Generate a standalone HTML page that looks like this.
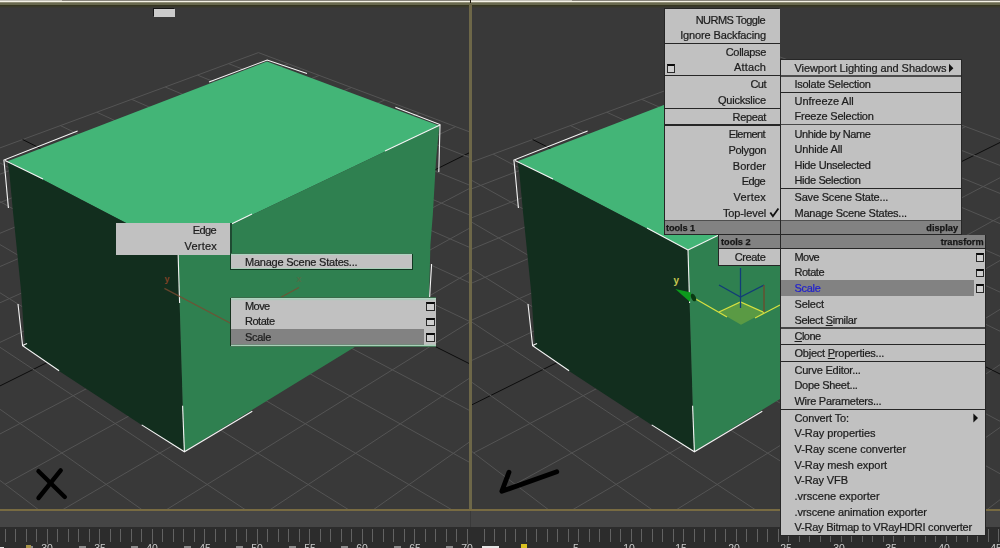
<!DOCTYPE html>
<html><head><meta charset="utf-8"><title>3ds Max quad menu</title>
<style>
html,body{margin:0;padding:0;background:#393939;}
#root{position:relative;width:1000px;height:548px;overflow:hidden;background:#393939;font-family:"Liberation Sans",sans-serif;}
.t{will-change:transform;position:absolute;height:16px;line-height:16px;font-size:11px;white-space:nowrap;-webkit-text-stroke:0.22px;}
.h{will-change:transform;position:absolute;height:13px;line-height:13px;font-size:9.2px;font-weight:bold;color:#161616;white-space:nowrap;-webkit-text-stroke:0.25px;}
.b{position:absolute;}
.ic{position:absolute;box-sizing:border-box;width:8.3px;height:8.7px;border:1.3px solid #2a2a2a;border-top:2.8px solid #0a0a0a;background:#cfcfcf;}
.tk{position:absolute;top:528.6px;width:1px;height:13.4px;background:#626262;}
  .n{will-change:transform;position:absolute;top:542.1px;width:20px;text-align:center;font-size:10.5px;line-height:12px;color:#cccccc;}
u{text-decoration:underline;}
</style></head><body><div id="root">
<div class="b" style="left:0;top:0;width:1000px;height:1px;background:#86837a"></div>
<div class="b" style="left:0;top:0;width:62px;height:1px;background:#c4c2b8"></div><div class="b" style="left:471px;top:0;width:101px;height:1px;background:#c4c2b8"></div>
<div class="b" style="left:0;top:1px;width:1000px;height:1px;background:#f5f3e6"></div>
<div class="b" style="left:0;top:2px;width:1000px;height:1px;background:#8e8c74"></div>
<div class="b" style="left:0;top:3px;width:1000px;height:2px;background:#69694f"></div>
<div class="b" style="left:0;top:5px;width:1000px;height:1px;background:#34341f"></div>
<div class="b" style="left:0;top:6px;width:1000px;height:1px;background:#38382a"></div>
<div class="b" style="left:0;top:7px;width:1000px;height:1px;background:#393932"></div>
<svg width="1000" height="548" viewBox="0 0 1000 548" style="position:absolute;left:0;top:0">
<defs><clipPath id="cl"><rect x="0" y="8" width="469" height="501"/></clipPath>
<clipPath id="cr"><rect x="472" y="8" width="528" height="501"/></clipPath></defs>
<g clip-path="url(#cl)" stroke-width="1">
<line x1="-294.8" y1="256.6" x2="258.4" y2="52.6" stroke="#545454"/>
<line x1="-268.2" y1="276.9" x2="288.2" y2="63.8" stroke="#545454"/>
<line x1="-240.1" y1="298.2" x2="319.2" y2="75.4" stroke="#545454"/>
<line x1="-210.6" y1="320.6" x2="351.4" y2="87.5" stroke="#545454"/>
<line x1="-179.5" y1="344.2" x2="384.8" y2="100.0" stroke="#545454"/>
<line x1="-146.7" y1="369.1" x2="419.6" y2="113.1" stroke="#545454"/>
<line x1="-112.0" y1="395.4" x2="455.7" y2="126.6" stroke="#545454"/>
<line x1="-75.3" y1="423.3" x2="493.4" y2="140.8" stroke="#0c0c0c"/>
<line x1="-36.3" y1="452.9" x2="532.6" y2="155.5" stroke="#545454"/>
<line x1="5.0" y1="484.3" x2="573.5" y2="170.9" stroke="#545454"/>
<line x1="49.0" y1="517.7" x2="616.2" y2="186.9" stroke="#545454"/>
<line x1="96.0" y1="553.3" x2="660.9" y2="203.6" stroke="#545454"/>
<line x1="146.1" y1="591.4" x2="707.6" y2="221.2" stroke="#545454"/>
<line x1="199.8" y1="632.2" x2="756.5" y2="239.5" stroke="#545454"/>
<line x1="257.5" y1="676.0" x2="807.8" y2="258.8" stroke="#545454"/>
<line x1="-294.8" y1="256.6" x2="257.5" y2="676.0" stroke="#545454"/>
<line x1="-242.9" y1="237.5" x2="315.2" y2="632.2" stroke="#545454"/>
<line x1="-193.5" y1="219.2" x2="368.9" y2="591.5" stroke="#545454"/>
<line x1="-146.3" y1="201.8" x2="419.0" y2="553.5" stroke="#545454"/>
<line x1="-101.2" y1="185.2" x2="465.9" y2="518.0" stroke="#545454"/>
<line x1="-58.2" y1="169.3" x2="509.8" y2="484.7" stroke="#545454"/>
<line x1="-16.9" y1="154.1" x2="551.0" y2="453.4" stroke="#545454"/>
<line x1="22.6" y1="139.5" x2="589.8" y2="424.1" stroke="#0c0c0c"/>
<line x1="60.4" y1="125.6" x2="626.3" y2="396.4" stroke="#545454"/>
<line x1="96.7" y1="112.2" x2="660.8" y2="370.2" stroke="#545454"/>
<line x1="131.6" y1="99.3" x2="693.4" y2="345.5" stroke="#545454"/>
<line x1="165.2" y1="87.0" x2="724.3" y2="322.1" stroke="#545454"/>
<line x1="197.4" y1="75.1" x2="753.5" y2="299.9" stroke="#545454"/>
<line x1="228.5" y1="63.6" x2="781.3" y2="278.8" stroke="#545454"/>
<line x1="258.4" y1="52.6" x2="807.8" y2="258.8" stroke="#545454"/>
<polygon points="7.5,161.2 267.0,61.5 439.3,125.8 178.0,250.0" fill="#43b577"/>
<polygon points="7.5,161.2 178.0,250.0 184.2,451.6 141.7,425.0 59.0,371.0 25.0,347.0 21.0,290.0 15.2,233.0 12.6,208.0 9.6,175.0" fill="#122e1e"/>
<polygon points="178.0,250.0 439.3,125.8 436.0,160.0 432.8,215.0 430.4,245.0 429.0,301.5 184.2,451.6" fill="#2f8050"/>
<polyline points="8.4,208.0 5.4,175.0 3.9,160.0 77.6,131.0" stroke="#f4f4f4" stroke-width="1.1" fill="none"/>
<polyline points="209.0,82.0 267.2,60.0 307.0,73.5" stroke="#f4f4f4" stroke-width="1.1" fill="none"/>
<polyline points="395.4,107.2 440.0,124.5 438.8,172.0" stroke="#f4f4f4" stroke-width="1.1" fill="none"/>
<polyline points="440.0,125.0 385.0,151.0" stroke="#f4f4f4" stroke-width="1.1" fill="none"/>
<polyline points="18.0,304.0 22.6,345.6 59.1,370.8" stroke="#f4f4f4" stroke-width="1.1" fill="none"/>
<polyline points="22.6,345.6 27.0,343.6" stroke="#f4f4f4" stroke-width="1.1" fill="none"/>
<polyline points="141.7,424.9 184.4,451.8 252.3,411.2" stroke="#f4f4f4" stroke-width="1.1" fill="none"/>
<polyline points="184.4,451.8 182.6,405.7" stroke="#f4f4f4" stroke-width="1.1" fill="none"/>
<polyline points="431.6,264.0 429.6,297.5" stroke="#f4f4f4" stroke-width="1.1" fill="none"/>
<polyline points="178.0,250.0 179.6,303.0" stroke="#f4f4f4" stroke-width="1.1" fill="none"/>
<polyline points="178.0,250.0 252.0,214.0" stroke="#f4f4f4" stroke-width="1.1" fill="none"/>
<polyline points="178.0,250.0 137.0,228.0" stroke="#f4f4f4" stroke-width="1.1" fill="none"/>
<polyline points="5.0,160.4 43.0,179.0" stroke="#f4f4f4" stroke-width="1.1" fill="none"/>
<g stroke="#7a4a30" stroke-width="1.2" fill="none" opacity="0.8"><line x1="164.4" y1="288.4" x2="231" y2="323.5"/><line x1="279.6" y1="298" x2="299" y2="287.5"/></g>
<text x="164.5" y="282" font-family="Liberation Sans" font-size="9" font-weight="bold" fill="#8a4428" opacity="0.9">y</text>
<text x="296.5" y="282" font-family="Liberation Sans" font-size="9" font-weight="bold" fill="#5a6a44" opacity="0.7">x</text>
<g stroke="#000" stroke-width="4.4" stroke-linecap="round"><line x1="38.5" y1="471.2" x2="64.8" y2="497"/><line x1="60.7" y1="470.4" x2="38.5" y2="498"/></g>
</g>
<g clip-path="url(#cr)" stroke-width="1">
<line x1="215.2" y1="256.6" x2="768.4" y2="52.6" stroke="#545454"/>
<line x1="241.8" y1="276.9" x2="798.2" y2="63.8" stroke="#545454"/>
<line x1="269.9" y1="298.2" x2="829.2" y2="75.4" stroke="#545454"/>
<line x1="299.4" y1="320.6" x2="861.4" y2="87.5" stroke="#545454"/>
<line x1="330.5" y1="344.2" x2="894.8" y2="100.0" stroke="#545454"/>
<line x1="363.3" y1="369.1" x2="929.6" y2="113.1" stroke="#545454"/>
<line x1="398.0" y1="395.4" x2="965.7" y2="126.6" stroke="#545454"/>
<line x1="434.7" y1="423.3" x2="1003.4" y2="140.8" stroke="#0c0c0c"/>
<line x1="473.7" y1="452.9" x2="1042.6" y2="155.5" stroke="#545454"/>
<line x1="515.0" y1="484.3" x2="1083.5" y2="170.9" stroke="#545454"/>
<line x1="559.0" y1="517.7" x2="1126.2" y2="186.9" stroke="#545454"/>
<line x1="606.0" y1="553.3" x2="1170.9" y2="203.6" stroke="#545454"/>
<line x1="656.1" y1="591.4" x2="1217.6" y2="221.2" stroke="#545454"/>
<line x1="709.8" y1="632.2" x2="1266.5" y2="239.5" stroke="#545454"/>
<line x1="767.5" y1="676.0" x2="1317.8" y2="258.8" stroke="#545454"/>
<line x1="215.2" y1="256.6" x2="767.5" y2="676.0" stroke="#545454"/>
<line x1="267.1" y1="237.5" x2="825.2" y2="632.2" stroke="#545454"/>
<line x1="316.5" y1="219.2" x2="878.9" y2="591.5" stroke="#545454"/>
<line x1="363.7" y1="201.8" x2="929.0" y2="553.5" stroke="#545454"/>
<line x1="408.8" y1="185.2" x2="975.9" y2="518.0" stroke="#545454"/>
<line x1="451.8" y1="169.3" x2="1019.8" y2="484.7" stroke="#545454"/>
<line x1="493.1" y1="154.1" x2="1061.0" y2="453.4" stroke="#545454"/>
<line x1="532.6" y1="139.5" x2="1099.8" y2="424.1" stroke="#0c0c0c"/>
<line x1="570.4" y1="125.6" x2="1136.3" y2="396.4" stroke="#545454"/>
<line x1="606.7" y1="112.2" x2="1170.8" y2="370.2" stroke="#545454"/>
<line x1="641.6" y1="99.3" x2="1203.4" y2="345.5" stroke="#545454"/>
<line x1="675.2" y1="87.0" x2="1234.3" y2="322.1" stroke="#545454"/>
<line x1="707.4" y1="75.1" x2="1263.5" y2="299.9" stroke="#545454"/>
<line x1="738.5" y1="63.6" x2="1291.3" y2="278.8" stroke="#545454"/>
<line x1="768.4" y1="52.6" x2="1317.8" y2="258.8" stroke="#545454"/>
<polygon points="517.5,161.2 777.0,61.5 949.3,125.8 688.0,250.0" fill="#43b577"/>
<polygon points="517.5,161.2 688.0,250.0 694.2,451.6 651.7,425.0 569.0,371.0 535.0,347.0 531.0,290.0 525.2,233.0 522.6,208.0 519.6,175.0" fill="#122e1e"/>
<polygon points="688.0,250.0 949.3,125.8 946.0,160.0 942.8,215.0 940.4,245.0 939.0,301.5 694.2,451.6" fill="#2f8050"/>
<polyline points="518.4,208.0 515.4,175.0 513.9,160.0 587.6,131.0" stroke="#f4f4f4" stroke-width="1.1" fill="none"/>
<polyline points="719.0,82.0 777.2,60.0 817.0,73.5" stroke="#f4f4f4" stroke-width="1.1" fill="none"/>
<polyline points="905.4,107.2 950.0,124.5 948.8,172.0" stroke="#f4f4f4" stroke-width="1.1" fill="none"/>
<polyline points="950.0,125.0 895.0,151.0" stroke="#f4f4f4" stroke-width="1.1" fill="none"/>
<polyline points="528.0,304.0 532.6,345.6 569.1,370.8" stroke="#f4f4f4" stroke-width="1.1" fill="none"/>
<polyline points="532.6,345.6 537.0,343.6" stroke="#f4f4f4" stroke-width="1.1" fill="none"/>
<polyline points="651.7,424.9 694.4,451.8 762.3,411.2" stroke="#f4f4f4" stroke-width="1.1" fill="none"/>
<polyline points="694.4,451.8 692.6,405.7" stroke="#f4f4f4" stroke-width="1.1" fill="none"/>
<polyline points="941.6,264.0 939.6,297.5" stroke="#f4f4f4" stroke-width="1.1" fill="none"/>
<polyline points="688.0,250.0 689.6,303.0" stroke="#f4f4f4" stroke-width="1.1" fill="none"/>
<polyline points="688.0,250.0 762.0,214.0" stroke="#f4f4f4" stroke-width="1.1" fill="none"/>
<polyline points="688.0,250.0 647.0,228.0" stroke="#f4f4f4" stroke-width="1.1" fill="none"/>
<polyline points="515.0,160.4 553.0,179.0" stroke="#f4f4f4" stroke-width="1.1" fill="none"/>
<polyline points="556.8,471.8 501.8,491.3 509,472.2" stroke="#000" stroke-width="4.8" stroke-linecap="round" stroke-linejoin="round" fill="none"/>
<!-- gizmo -->
<polygon points="719,312 740.5,302 764,312.4 741,324.7" fill="#5a9a44"/>
<g stroke="#d8e040" stroke-width="1.3" fill="none"><polyline points="694,298 727,317"/><polyline points="719,312 740.5,302 764,312.4"/><line x1="755" y1="318" x2="780" y2="305"/></g>
<g stroke="#123c78" stroke-width="1.3" fill="none"><line x1="740.5" y1="268" x2="740.5" y2="308"/><polyline points="719,285 740.5,297 764,285"/></g>
<line x1="764" y1="285" x2="764" y2="312" stroke="#6e4a2c" stroke-width="1.3"/>
<polygon points="675.3,289 691,292.5 690,302" fill="#0c9a1c"/>
<ellipse cx="693.5" cy="297.5" rx="2.2" ry="4" fill="#0a3a12" transform="rotate(-25 693.5 297.5)"/>
<text x="673.6" y="284" font-family="Liberation Sans" font-size="10" font-weight="bold" fill="#c8c850">y</text>
</g>
</svg>
<div class="b" style="left:154px;top:8.6px;width:21px;height:8px;background:#cbcbcb;box-shadow:-1px -1px 0 #151515"></div>
<div class="b" style="left:468.7px;top:4px;width:2.9px;height:506px;background:#6d6748"></div><div class="b" style="left:469.8px;top:0;width:1.3px;height:2.7px;background:#1c160a"></div>
<div class="b" style="left:0;top:508.7px;width:1000px;height:2.6px;background:#786b42"></div>
<div class="b" style="left:0;top:511.3px;width:1000px;height:16px;background:#454545"></div>
<div class="b" style="left:0;top:527.2px;width:1000px;height:21px;background:#2c2c2c"></div>
<div class="b" style="left:470px;top:511px;width:1px;height:16px;background:#3a3a3a"></div>
<div class="tk" style="left:4.5px"></div><div class="tk" style="left:15.0px"></div><div class="tk" style="left:25.5px"></div><div class="tk" style="left:36.0px"></div><div class="tk" style="left:46.5px;height:15.2px"></div><div class="tk" style="left:57.0px"></div><div class="tk" style="left:67.5px"></div><div class="tk" style="left:78.0px"></div><div class="tk" style="left:88.5px"></div><div class="tk" style="left:99.0px;height:15.2px"></div><div class="tk" style="left:109.5px"></div><div class="tk" style="left:120.0px"></div><div class="tk" style="left:130.5px"></div><div class="tk" style="left:141.0px"></div><div class="tk" style="left:151.5px;height:15.2px"></div><div class="tk" style="left:162.0px"></div><div class="tk" style="left:172.5px"></div><div class="tk" style="left:183.0px"></div><div class="tk" style="left:193.5px"></div><div class="tk" style="left:204.0px;height:15.2px"></div><div class="tk" style="left:214.5px"></div><div class="tk" style="left:225.0px"></div><div class="tk" style="left:235.5px"></div><div class="tk" style="left:246.0px"></div><div class="tk" style="left:256.5px;height:15.2px"></div><div class="tk" style="left:267.0px"></div><div class="tk" style="left:277.5px"></div><div class="tk" style="left:288.0px"></div><div class="tk" style="left:298.5px"></div><div class="tk" style="left:309.0px;height:15.2px"></div><div class="tk" style="left:319.5px"></div><div class="tk" style="left:330.0px"></div><div class="tk" style="left:340.5px"></div><div class="tk" style="left:351.0px"></div><div class="tk" style="left:361.5px;height:15.2px"></div><div class="tk" style="left:372.0px"></div><div class="tk" style="left:382.5px"></div><div class="tk" style="left:393.0px"></div><div class="tk" style="left:403.5px"></div><div class="tk" style="left:414.0px;height:15.2px"></div><div class="tk" style="left:424.5px"></div><div class="tk" style="left:435.0px"></div><div class="tk" style="left:445.5px"></div><div class="tk" style="left:456.0px"></div><div class="tk" style="left:466.5px;height:15.2px"></div><div class="tk" style="left:483.8px"></div><div class="tk" style="left:494.3px"></div><div class="tk" style="left:504.8px"></div><div class="tk" style="left:515.3px"></div><div class="tk" style="left:525.8px"></div><div class="tk" style="left:536.3px"></div><div class="tk" style="left:546.8px"></div><div class="tk" style="left:557.3px"></div><div class="tk" style="left:567.8px"></div><div class="tk" style="left:578.3px"></div><div class="tk" style="left:588.8px"></div><div class="tk" style="left:599.3px"></div><div class="tk" style="left:609.8px"></div><div class="tk" style="left:620.3px"></div><div class="tk" style="left:630.8px"></div><div class="tk" style="left:641.3px"></div><div class="tk" style="left:651.8px"></div><div class="tk" style="left:662.3px"></div><div class="tk" style="left:672.8px"></div><div class="tk" style="left:683.3px"></div><div class="tk" style="left:693.8px"></div><div class="tk" style="left:704.3px"></div><div class="tk" style="left:714.8px"></div><div class="tk" style="left:725.3px"></div><div class="tk" style="left:735.8px"></div><div class="tk" style="left:746.3px"></div><div class="tk" style="left:756.8px"></div><div class="tk" style="left:767.3px"></div><div class="tk" style="left:777.8px"></div><div class="tk" style="left:788.3px"></div><div class="tk" style="left:798.8px"></div><div class="tk" style="left:809.3px"></div><div class="tk" style="left:819.8px"></div><div class="tk" style="left:830.3px"></div><div class="tk" style="left:840.8px"></div><div class="tk" style="left:851.3px"></div><div class="tk" style="left:861.8px"></div><div class="tk" style="left:872.3px"></div><div class="tk" style="left:882.8px"></div><div class="tk" style="left:893.3px"></div><div class="tk" style="left:903.8px"></div><div class="tk" style="left:914.3px"></div><div class="tk" style="left:924.8px"></div><div class="tk" style="left:935.3px"></div><div class="tk" style="left:945.8px"></div><div class="tk" style="left:956.3px"></div><div class="tk" style="left:966.8px"></div><div class="tk" style="left:977.3px"></div><div class="tk" style="left:987.8px"></div><div class="tk" style="left:998.3px"></div>
<div class="n" style="left:37.0px">30</div><div class="n" style="left:89.5px">35</div><div class="n" style="left:142.0px">40</div><div class="n" style="left:194.5px">45</div><div class="n" style="left:247.0px">50</div><div class="n" style="left:299.5px">55</div><div class="n" style="left:352.0px">60</div><div class="n" style="left:404.5px">65</div><div class="n" style="left:457.0px">70</div><div class="b" style="left:26.0px;top:546.3px;width:7px;height:1.7px;background:#8a8a8a"></div><div class="b" style="left:78.5px;top:546.3px;width:7px;height:1.7px;background:#8a8a8a"></div><div class="b" style="left:131.0px;top:546.3px;width:7px;height:1.7px;background:#8a8a8a"></div><div class="b" style="left:183.5px;top:546.3px;width:7px;height:1.7px;background:#8a8a8a"></div><div class="b" style="left:236.0px;top:546.3px;width:7px;height:1.7px;background:#8a8a8a"></div><div class="b" style="left:288.5px;top:546.3px;width:7px;height:1.7px;background:#8a8a8a"></div><div class="b" style="left:341.0px;top:546.3px;width:7px;height:1.7px;background:#8a8a8a"></div><div class="b" style="left:393.5px;top:546.3px;width:7px;height:1.7px;background:#8a8a8a"></div><div class="b" style="left:446.0px;top:546.3px;width:7px;height:1.7px;background:#8a8a8a"></div><div class="n" style="left:566.0px">5</div><div class="n" style="left:618.5px">10</div><div class="n" style="left:671.0px">15</div><div class="n" style="left:723.5px">20</div><div class="n" style="left:776.0px">25</div><div class="n" style="left:828.5px">30</div><div class="n" style="left:881.0px">35</div><div class="n" style="left:933.5px">40</div><div class="n" style="left:986.0px">45</div>
<div class="b" style="left:482px;top:546px;width:17px;height:2px;background:#e4e4e4"></div>
<div class="b" style="left:521px;top:543.5px;width:6px;height:5px;background:#d8c020"></div>
<div class="b" style="left:0;top:546.6px;width:4px;height:2px;background:#e0e0e0"></div>
<div class="b" style="left:25.5px;top:545.2px;width:5.5px;height:3px;background:#a8944a"></div>
<div class="b" style="left:664px;top:8px;width:116px;height:227px;background:#262626;"></div><div class="b" style="left:779px;top:8px;width:1.2px;height:51.2px;background:#393939;"></div><div class="b" style="left:665px;top:9px;width:114.6px;height:212px;background:#c1c1c1;"></div><div class="b" style="left:665px;top:221px;width:114.6px;height:13px;background:#828282;"></div><div class="b" style="left:665px;top:220.4px;width:114.6px;height:1px;background:#4e4e4e;"></div><div class="b" style="left:665px;top:42.5px;width:114.6px;height:1.1px;background:#262626;"></div><div class="b" style="left:665px;top:75.0px;width:114.6px;height:1.1px;background:#262626;"></div><div class="b" style="left:665px;top:107.5px;width:114.6px;height:1.1px;background:#262626;"></div><div class="b" style="left:665px;top:124.3px;width:114.6px;height:1.6px;background:#262626;"></div><div class="t" style="left:665px;width:101.00px;top:12px;padding-top:0.00px;text-align:right;color:#1c1c1c;letter-spacing:-0.52px;margin-left:-0.52px;">NURMS Toggle</div><div class="t" style="left:665px;width:101.00px;top:27px;padding-top:0.00px;text-align:right;color:#1c1c1c;letter-spacing:-0.13px;margin-left:-0.13px;">Ignore Backfacing</div><div class="t" style="left:665px;width:101.00px;top:44px;padding-top:0.00px;text-align:right;color:#1c1c1c;letter-spacing:-0.32px;margin-left:-0.32px;">Collapse</div><div class="t" style="left:665px;width:101.00px;top:59px;padding-top:0.00px;text-align:right;color:#1c1c1c;letter-spacing:0.12px;margin-left:0.12px;">Attach</div><div class="t" style="left:665px;width:101.00px;top:76px;padding-top:0.00px;text-align:right;color:#1c1c1c;letter-spacing:-0.51px;margin-left:-0.51px;">Cut</div><div class="t" style="left:665px;width:101.00px;top:92px;padding-top:0.00px;text-align:right;color:#1c1c1c;letter-spacing:-0.21px;margin-left:-0.21px;">Quickslice</div><div class="t" style="left:665px;width:101.00px;top:109px;padding-top:0.00px;text-align:right;color:#1c1c1c;letter-spacing:-0.34px;margin-left:-0.34px;">Repeat</div><div class="t" style="left:665px;width:101.00px;top:126px;padding-top:0.00px;text-align:right;color:#1c1c1c;letter-spacing:-0.59px;margin-left:-0.59px;">Element</div><div class="t" style="left:665px;width:101.00px;top:142px;padding-top:0.00px;text-align:right;color:#1c1c1c;letter-spacing:-0.33px;margin-left:-0.33px;">Polygon</div><div class="t" style="left:665px;width:101.00px;top:158px;padding-top:0.00px;text-align:right;color:#1c1c1c;letter-spacing:0.03px;margin-left:0.03px;">Border</div><div class="t" style="left:665px;width:101.00px;top:173px;padding-top:0.00px;text-align:right;color:#1c1c1c;letter-spacing:-0.63px;margin-left:-0.63px;">Edge</div><div class="t" style="left:665px;width:101.00px;top:189px;padding-top:0.00px;text-align:right;color:#1c1c1c;letter-spacing:0.22px;margin-left:0.22px;">Vertex</div><div class="t" style="left:665px;width:101.00px;top:205px;padding-top:0.00px;text-align:right;color:#1c1c1c;letter-spacing:-0.10px;margin-left:-0.10px;">Top-level</div><div class="ic" style="left:666.6px;top:64.2px"></div><div class="h" style="left:666.3px;top:222px;letter-spacing:-0.1px">tools 1</div><svg style="position:absolute;left:768px;top:206px" width="12" height="12" viewBox="0 0 12 12"><path d="M2.3 6.6 L4.9 10.3 L10.4 2.6" stroke="#111" stroke-width="1.8" fill="none"/></svg><div class="b" style="left:779.6px;top:59px;width:182.4px;height:176px;background:#262626;"></div><div class="b" style="left:781px;top:60px;width:180px;height:161px;background:#c1c1c1;"></div><div class="b" style="left:781px;top:221px;width:180px;height:13px;background:#828282;"></div><div class="b" style="left:781px;top:220.4px;width:180px;height:1px;background:#4e4e4e;"></div><div class="b" style="left:781px;top:75.1px;width:180px;height:1.6px;background:#4c4c4c;"></div><div class="b" style="left:781px;top:123.9px;width:180px;height:1.5px;background:#474747;"></div><div class="b" style="left:781px;top:91.95px;width:180px;height:1.1px;background:#262626;"></div><div class="b" style="left:781px;top:187.54999999999998px;width:180px;height:1.1px;background:#262626;"></div><div class="t" style="left:794px;top:60px;padding:0.00px 0 0 0.50px;color:#1c1c1c;letter-spacing:-0.07px;">Viewport Lighting and Shadows</div><div class="t" style="left:794px;top:76px;padding:0.00px 0 0 0.50px;color:#1c1c1c;letter-spacing:-0.27px;">Isolate Selection</div><div class="t" style="left:794px;top:93px;padding:0.00px 0 0 0.50px;color:#1c1c1c;letter-spacing:-0.00px;">Unfreeze All</div><div class="t" style="left:794px;top:108px;padding:0.00px 0 0 0.50px;color:#1c1c1c;letter-spacing:-0.21px;">Freeze Selection</div><div class="t" style="left:794px;top:126px;padding:0.00px 0 0 0.50px;color:#1c1c1c;letter-spacing:-0.43px;">Unhide by Name</div><div class="t" style="left:794px;top:141px;padding:0.00px 0 0 0.50px;color:#1c1c1c;letter-spacing:-0.18px;">Unhide All</div><div class="t" style="left:794px;top:157px;padding:0.00px 0 0 0.50px;color:#1c1c1c;letter-spacing:-0.31px;">Hide Unselected</div><div class="t" style="left:794px;top:172px;padding:0.00px 0 0 0.50px;color:#1c1c1c;letter-spacing:-0.36px;">Hide Selection</div><div class="t" style="left:794px;top:189px;padding:0.00px 0 0 0.50px;color:#1c1c1c;letter-spacing:-0.19px;">Save Scene State...</div><div class="t" style="left:794px;top:205px;padding:0.00px 0 0 0.50px;color:#1c1c1c;letter-spacing:-0.23px;">Manage Scene States...</div><div class="h" style="left:781px;width:177px;text-align:right;top:222px">display</div><svg style="position:absolute;left:947px;top:62px" width="8" height="12" viewBox="0 0 8 12"><path d="M2 1.8 L6.4 6.2 L2 10.6 Z" fill="#111"/></svg><div class="b" style="left:718px;top:235px;width:63px;height:31px;background:#262626;"></div><div class="b" style="left:719px;top:235.2px;width:61px;height:12.8px;background:#828282;"></div><div class="b" style="left:719px;top:249px;width:61px;height:15.6px;background:#c1c1c1;"></div><div class="h" style="left:720.6px;top:235.6px">tools 2</div><div class="t" style="left:718px;width:47.50px;top:249px;padding-top:0.00px;text-align:right;color:#1c1c1c;letter-spacing:-0.37px;margin-left:-0.37px;">Create</div><div class="b" style="left:780px;top:235px;width:206px;height:301px;background:#262626;"></div><div class="b" style="left:781px;top:235.2px;width:204px;height:12.8px;background:#828282;"></div><div class="b" style="left:781px;top:249px;width:204px;height:286px;background:#c1c1c1;"></div><div class="h" style="left:781px;width:202.6px;text-align:right;top:235.5px">transform</div><div class="b" style="left:781px;top:280px;width:193px;height:16px;background:#828282;"></div><div class="b" style="left:781px;top:327.4px;width:204px;height:1.5px;background:#474747;"></div><div class="b" style="left:781px;top:344.05px;width:204px;height:1.1px;background:#262626;"></div><div class="b" style="left:781px;top:360.75px;width:204px;height:1.1px;background:#262626;"></div><div class="b" style="left:781px;top:408.84999999999997px;width:204px;height:1.1px;background:#262626;"></div><div class="t" style="left:794px;top:249px;padding:0.00px 0 0 0.50px;color:#1c1c1c;letter-spacing:-0.57px;">Move</div><div class="t" style="left:794px;top:264px;padding:0.00px 0 0 0.50px;color:#1c1c1c;letter-spacing:-0.48px;">Rotate</div><div class="t" style="left:794px;top:280px;padding:0.00px 0 0 0.50px;color:#2222cc;letter-spacing:-0.31px;">Scale</div><div class="t" style="left:794px;top:296px;padding:0.00px 0 0 0.50px;color:#1c1c1c;letter-spacing:-0.20px;">Select</div><div class="t" style="left:794px;top:312px;padding:0.00px 0 0 0.50px;color:#1c1c1c;letter-spacing:-0.35px;">Select <u>S</u>imilar</div><div class="t" style="left:794px;top:328px;padding:0.00px 0 0 0.50px;color:#1c1c1c;letter-spacing:-0.54px;"><u>C</u>lone</div><div class="t" style="left:794px;top:345px;padding:0.00px 0 0 0.50px;color:#1c1c1c;letter-spacing:-0.23px;">Object <u>P</u>roperties...</div><div class="t" style="left:794px;top:362px;padding:0.00px 0 0 0.50px;color:#1c1c1c;letter-spacing:-0.24px;">Curve Editor...</div><div class="t" style="left:794px;top:377px;padding:0.00px 0 0 0.50px;color:#1c1c1c;letter-spacing:-0.32px;">Dope Sheet...</div><div class="t" style="left:794px;top:393px;padding:0.00px 0 0 0.50px;color:#1c1c1c;letter-spacing:-0.27px;">Wire Parameters...</div><div class="t" style="left:794px;top:410px;padding:0.00px 0 0 0.50px;color:#1c1c1c;letter-spacing:-0.14px;">Convert To:</div><div class="t" style="left:794px;top:425px;padding:0.00px 0 0 0.50px;color:#1c1c1c;letter-spacing:-0.06px;">V-Ray properties</div><div class="t" style="left:794px;top:441px;padding:0.00px 0 0 0.50px;color:#1c1c1c;letter-spacing:0.02px;">V-Ray scene converter</div><div class="t" style="left:794px;top:457px;padding:0.00px 0 0 0.50px;color:#1c1c1c;letter-spacing:-0.06px;">V-Ray mesh export</div><div class="t" style="left:794px;top:472px;padding:0.00px 0 0 0.50px;color:#1c1c1c;letter-spacing:-0.11px;">V-Ray VFB</div><div class="t" style="left:794px;top:488px;padding:0.00px 0 0 0.50px;color:#1c1c1c;letter-spacing:0.01px;">.vrscene exporter</div><div class="t" style="left:794px;top:504px;padding:0.00px 0 0 0.50px;color:#1c1c1c;letter-spacing:-0.13px;">.vrscene animation exporter</div><div class="t" style="left:794px;top:519px;padding:0.00px 0 0 0.50px;color:#1c1c1c;letter-spacing:-0.23px;">V-Ray Bitmap to VRayHDRI converter</div><div class="ic" style="left:975.7px;top:253px"></div><div class="ic" style="left:975.7px;top:268.6px"></div><div class="ic" style="left:975.7px;top:284.2px"></div><svg style="position:absolute;left:972px;top:412px" width="8" height="12" viewBox="0 0 8 12"><path d="M1.4 1.6 L6 6 L1.4 10.4 Z" fill="#111"/></svg><div class="b" style="left:115.5px;top:222.6px;width:116px;height:32px;background:#1f4a32;"></div><div class="b" style="left:115.5px;top:222.6px;width:114.3px;height:32px;background:#c1c1c1;"></div><div class="t" style="left:115px;width:102.00px;top:222px;padding-top:0.00px;text-align:right;color:#1c1c1c;letter-spacing:-0.63px;margin-left:-0.63px;">Edge</div><div class="t" style="left:115px;width:102.00px;top:238px;padding-top:0.00px;text-align:right;color:#1c1c1c;letter-spacing:0.22px;margin-left:0.22px;">Vertex</div><div class="b" style="left:230.4px;top:254px;width:182.8px;height:16px;background:#123822;"></div><div class="b" style="left:231.4px;top:253px;width:180.8px;height:1px;background:#3b7452;"></div><div class="b" style="left:231.4px;top:254px;width:180.8px;height:15px;background:#c1c1c1;"></div><div class="b" style="left:231.4px;top:254px;width:180.8px;height:1px;background:#acd4be;"></div><div class="b" style="left:231.4px;top:268px;width:180.8px;height:1px;background:#a8d0b8;"></div><div class="t" style="left:245px;top:254px;padding:0.00px 0 0 0.00px;color:#1c1c1c;letter-spacing:-0.23px;">Manage Scene States...</div><div class="b" style="left:229.8px;top:298.2px;width:2px;height:47.4px;background:#17321f;"></div><div class="b" style="left:231.3px;top:297px;width:204.5px;height:1px;background:#3a6b4a;"></div><div class="b" style="left:231.3px;top:298px;width:204.5px;height:47px;background:#c1c1c1;"></div><div class="b" style="left:231.3px;top:298px;width:204.5px;height:1px;background:#b0d4c0;"></div><div class="b" style="left:231.3px;top:299px;width:204.5px;height:1px;background:#afc9bb;"></div><div class="b" style="left:231.3px;top:300px;width:204.5px;height:1px;background:#bdc3c0;"></div><div class="b" style="left:231.3px;top:329.4px;width:192.7px;height:14.6px;background:#828282;"></div><div class="b" style="left:231.3px;top:344px;width:192.7px;height:1px;background:#72897a;"></div><div class="b" style="left:424px;top:344px;width:11.8px;height:1px;background:#b4c4ba;"></div><div class="b" style="left:231.3px;top:345px;width:204.5px;height:1px;background:#a8d0b8;"></div><div class="b" style="left:231.3px;top:346px;width:204.5px;height:1px;background:#487a5a;"></div><div class="t" style="left:245px;top:298px;padding:0.00px 0 0 0.00px;color:#1c1c1c;letter-spacing:-0.57px;">Move</div><div class="t" style="left:245px;top:313px;padding:0.00px 0 0 0.00px;color:#1c1c1c;letter-spacing:-0.48px;">Rotate</div><div class="t" style="left:245px;top:329px;padding:0.00px 0 0 0.00px;color:#1c1c1c;letter-spacing:-0.31px;">Scale</div><div class="ic" style="left:426.3px;top:302px"></div><div class="ic" style="left:426.3px;top:317.6px"></div><div class="ic" style="left:426.3px;top:333.2px"></div>
</div></body></html>
